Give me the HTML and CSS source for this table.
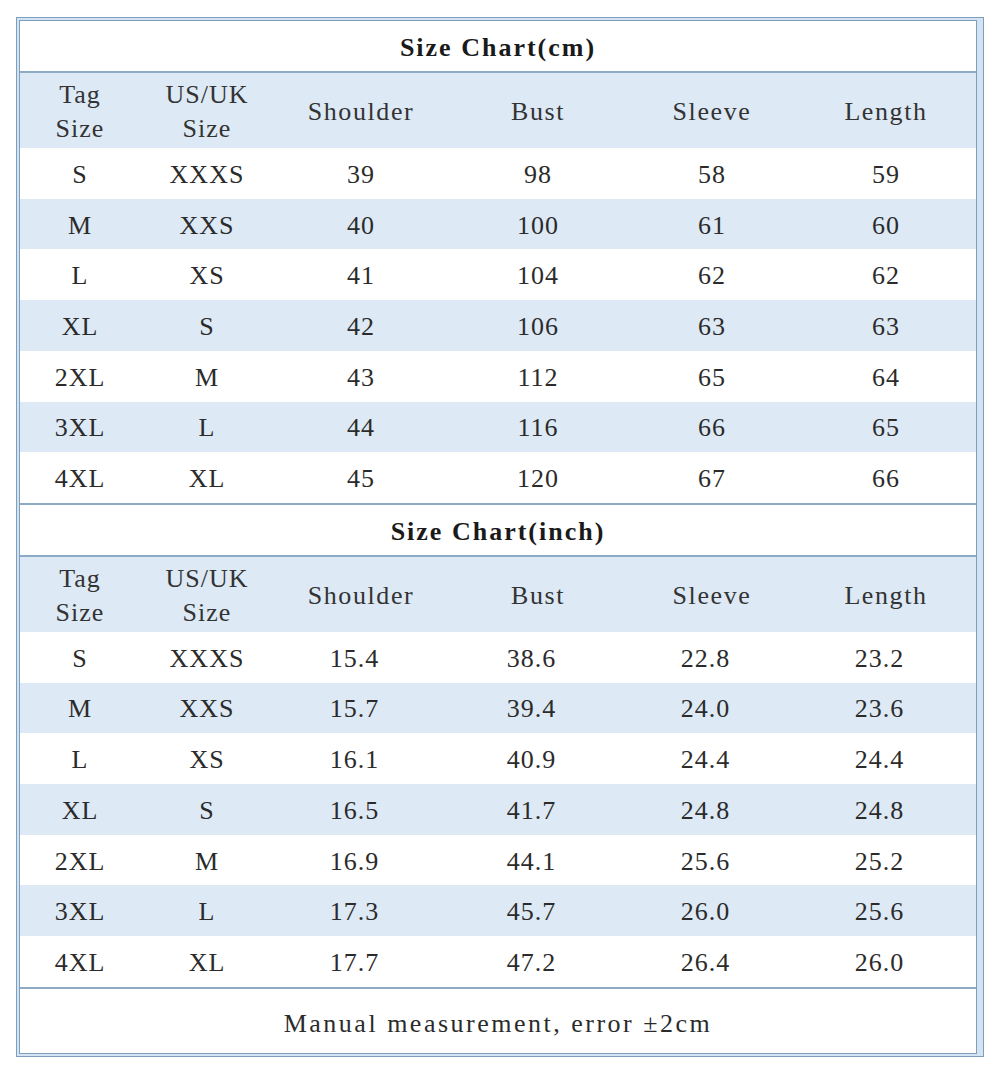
FILE: index.html
```html
<!DOCTYPE html>
<html>
<head>
<meta charset="utf-8">
<link rel="stylesheet" href="styles.css">
</head>
<body>
<div class="frame">
  <div class="sheet">
    <div class="title">Size Chart(cm)</div>
    <div class="rule"></div>
    <div class="row head">
      <div>Tag<br>Size</div><div>US/UK<br>Size</div><div>Shoulder</div><div>Bust</div><div>Sleeve</div><div>Length</div>
    </div>
    <div class="row"><div>S</div><div>XXXS</div><div>39</div><div>98</div><div>58</div><div>59</div></div>
    <div class="row alt"><div>M</div><div>XXS</div><div>40</div><div>100</div><div>61</div><div>60</div></div>
    <div class="row"><div>L</div><div>XS</div><div>41</div><div>104</div><div>62</div><div>62</div></div>
    <div class="row alt"><div>XL</div><div>S</div><div>42</div><div>106</div><div>63</div><div>63</div></div>
    <div class="row"><div>2XL</div><div>M</div><div>43</div><div>112</div><div>65</div><div>64</div></div>
    <div class="row alt"><div>3XL</div><div>L</div><div>44</div><div>116</div><div>66</div><div>65</div></div>
    <div class="row"><div>4XL</div><div>XL</div><div>45</div><div>120</div><div>67</div><div>66</div></div>
    <div class="rule"></div>
    <div class="title">Size Chart(inch)</div>
    <div class="rule"></div>
    <div class="row head">
      <div>Tag<br>Size</div><div>US/UK<br>Size</div><div>Shoulder</div><div>Bust</div><div>Sleeve</div><div>Length</div>
    </div>
    <div class="row inch"><div>S</div><div>XXXS</div><div>15.4</div><div>38.6</div><div>22.8</div><div>23.2</div></div>
    <div class="row inch alt"><div>M</div><div>XXS</div><div>15.7</div><div>39.4</div><div>24.0</div><div>23.6</div></div>
    <div class="row inch"><div>L</div><div>XS</div><div>16.1</div><div>40.9</div><div>24.4</div><div>24.4</div></div>
    <div class="row inch alt"><div>XL</div><div>S</div><div>16.5</div><div>41.7</div><div>24.8</div><div>24.8</div></div>
    <div class="row inch"><div>2XL</div><div>M</div><div>16.9</div><div>44.1</div><div>25.6</div><div>25.2</div></div>
    <div class="row inch alt"><div>3XL</div><div>L</div><div>17.3</div><div>45.7</div><div>26.0</div><div>25.6</div></div>
    <div class="row inch"><div>4XL</div><div>XL</div><div>17.7</div><div>47.2</div><div>26.4</div><div>26.0</div></div>
    <div class="rule"></div>
    <div class="footer">Manual measurement, error ±2cm</div>
  </div>
</div>
</body>
</html>
```
FILE: styles.css
```css
html, body {
  margin: 0;
  padding: 0;
  background: #ffffff;
}

body {
  font-family: "Liberation Serif", "DejaVu Serif", serif;
  font-size: 26px;
  letter-spacing: 1px;
  color: #2b2b2b;
}

.frame {
  margin: 17px 0 0 16px;
  width: 962px;
  border: 1px solid #7d9fbd;
  padding: 2px;
  background: #d3e3f1;
}

.sheet {
  border: 1px solid #7d9fbd;
  background: #ffffff;
  display: flex;
  flex-direction: column;
  width: 956px;
}

.title {
  height: 50px;
  display: flex;
  align-items: center;
  justify-content: center;
  padding-top: 4px;
  box-sizing: border-box;
  font-weight: bold;
  letter-spacing: 2px;
  color: #1a1a1a;
}

.rule {
  height: 2px;
  background: #8eabc5;
}

.row {
  display: grid;
  grid-template-columns: 120px 134px 174px 180px 168px 180px;
  height: 50.714px;
  align-items: center;
  text-align: center;
}

.row > div {
  padding-top: 3px;
}

.row.alt {
  background: #dde9f5;
}

.row.head {
  height: 75px;
  background: #dde9f5;
  line-height: 34px;
  color: #333333;
}

.row.head > div:nth-child(n+3) {
  letter-spacing: 1.6px;
}

.row.inch > div:nth-child(n+3) {
  padding-right: 13px;
  word-spacing: 0;
}

.footer {
  height: 64px;
  display: flex;
  align-items: center;
  justify-content: center;
  padding-top: 6px;
  box-sizing: border-box;
  letter-spacing: 2.5px;
}
```
